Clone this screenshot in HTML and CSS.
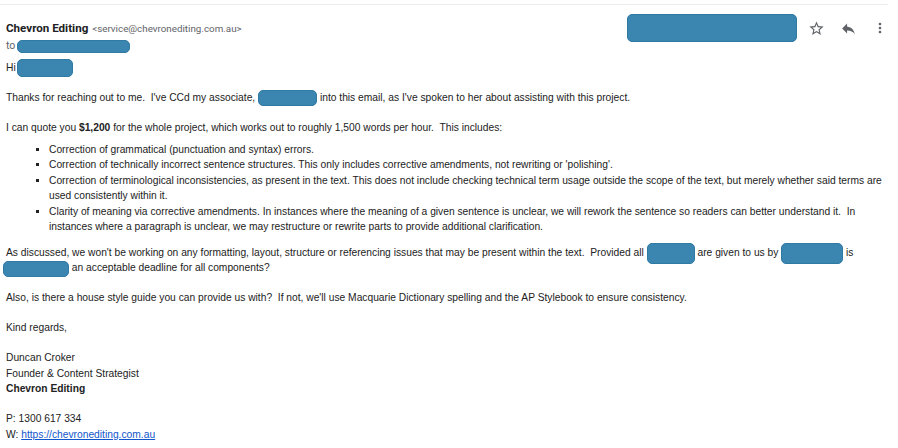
FILE: index.html
```html
<!DOCTYPE html>
<html>
<head>
<meta charset="utf-8">
<title>Chevron Editing - quote</title>
<link rel="stylesheet" href="styles.css">
</head>
<body>
<div class="top-rule"></div>

<div class="msg-head">
  <div class="sender">
    <div class="from"><span class="name">Chevron Editing</span> <span class="addr">&lt;service@chevronediting.com.au&gt;</span></div>
    <div class="to">to <span class="redact r-to"></span></div>
  </div>
  <div class="actions">
    <span class="redact r-date"></span>
    <span class="icon">
      <svg viewBox="0 0 24 24" width="17" height="17"><path d="M22 9.24l-7.19-.62L12 2 9.19 8.63 2 9.24l5.46 4.730L5.82 21 12 17.27 18.18 21l-1.63-7.03L22 9.24zM12 15.4l-3.76 2.27 1-4.28-3.32-2.88 4.38-.38L12 6.1l1.71 4.04 4.38.38-3.32 2.88 1 4.28L12 15.4z"/></svg>
    </span>
    <span class="icon">
      <svg viewBox="0 0 24 24" width="17" height="17"><path d="M10 9V5l-7 7 7 7v-4.1c5 0 8.5 1.6 11 5.1-1-5-4-10-11-11z"/></svg>
    </span>
    <span class="icon">
      <svg viewBox="0 0 24 24" width="16" height="16"><path d="M12 8c1.1 0 2-.9 2-2s-.9-2-2-2-2 .9-2 2 .9 2 2 2zm0 2c-1.1 0-2 .9-2 2s.9 2 2 2 2-.9 2-2-.9-2-2-2zm0 6c-1.1 0-2 .9-2 2s.9 2 2 2 2-.9 2-2-.9-2-2-2z"/></svg>
    </span>
  </div>
</div>

<div class="msg-body">
  <p class="greet">Hi <span class="redact r-hi"></span></p>

  <p>Thanks for reaching out to me.&nbsp; I've CCd my associate, <span class="redact r-assoc"></span> into this email, as I've spoken to her about assisting with this project.</p>

  <p class="lead">I can quote you <b>$1,200</b> for the whole project, which works out to roughly 1,500 words per hour.&nbsp; This includes:</p>

  <ul>
    <li>Correction of grammatical (punctuation and syntax) errors.</li>
    <li>Correction of technically incorrect sentence structures. This only includes corrective amendments, not rewriting or 'polishing'.</li>
    <li>Correction of terminological inconsistencies, as present in the text. This does not include checking technical term usage outside the scope of the text, but merely whether said terms are used consistently within it.</li>
    <li>Clarity of meaning via corrective amendments. In instances where the meaning of a given sentence is unclear, we will rework the sentence so readers can better understand it.&nbsp; In instances where a paragraph is unclear, we may restructure or rewrite parts to provide additional clarification.</li>
  </ul>

  <p>As discussed, we won't be working on any formatting, layout, structure or referencing issues that may be present within the text.&nbsp; Provided all <span class="redact r-all"></span> are given to us by <span class="redact r-by"></span> is <span class="redact r-date2"></span> an acceptable deadline for all components?</p>

  <p>Also, is there a house style guide you can provide us with?&nbsp; If not, we'll use Macquarie Dictionary spelling and the AP Stylebook to ensure consistency.</p>

  <p>Kind regards,</p>

  <p>Duncan Croker<br>
  Founder &amp; Content Strategist<br>
  <b>Chevron Editing</b></p>

  <p>P: 1300 617 334<br>
  W: <a href="https://chevronediting.com.au">https://chevronediting.com.au</a></p>
</div>
</body>
</html>
```

FILE: styles.css
```css
body {
   margin: 0;
   background-color: white;
   font-family: 'Liberation Sans', Arial, sans-serif;
   color: #222;
}

.top-rule {
   height: 0;
   margin: 4px 10px 0 0;
   border-top: 1px solid #ececec;
}

/* header */

.msg-head {
   display: flex;
   justify-content: space-between;
   align-items: flex-start;
   padding: 8px 2px 0 6px;
}

.sender {
   padding-top: 7px;
   font-family: Roboto, 'Liberation Sans', sans-serif;
}

.from {
   line-height: 14px;
}

.name {
   font-size: 11.6px;
   font-weight: bold;
   color: #202124;
}

.addr {
   font-size: 9.8px;
   color: #5f6368;
}

.to {
   margin-top: 2px;
   font-size: 10.5px;
   line-height: 16px;
   color: #5f6368;
}

.actions {
   display: flex;
   align-items: center;
   height: 28px;
   margin-top: 1px;
}

.icon {
   display: flex;
   justify-content: center;
   width: 32px;
}

.icon svg {
   fill: #5f6368;
}

/* redaction blobs */

.redact {
   display: inline-block;
   vertical-align: middle;
   background-color: #3b86b0;
   border: 1px solid #2f7aa3;
   border-radius: 5px;
   box-sizing: border-box;
   margin: -4px 0;
}

.r-date { width: 170px; height: 28px; margin: 0 3px 0 0; }
.r-to { width: 113px; height: 13px; margin-left: -1px; }
.r-hi { width: 56px; height: 18px; margin-left: -2px; }
.r-assoc { width: 59px; height: 16px; }
.r-all { width: 48px; height: 21px; }
.r-by { width: 62px; height: 21px; }
.r-date2 { width: 66px; height: 16px; margin-left: -3px; }

/* body */

.msg-body {
   padding: 0 12px 0 6px;
   font-size: 10.25px;
   line-height: 15.4px;
}

.msg-body p {
   margin: 0 0 14.6px;
}

.msg-body .greet {
   margin-top: 6px;
}

.msg-body .lead {
   margin-bottom: 6.6px;
}

ul {
   margin: 0 0 10.6px;
   padding-left: 43px;
}

li {
   list-style-type: square;
}

a {
   color: #1155cc;
}
```
